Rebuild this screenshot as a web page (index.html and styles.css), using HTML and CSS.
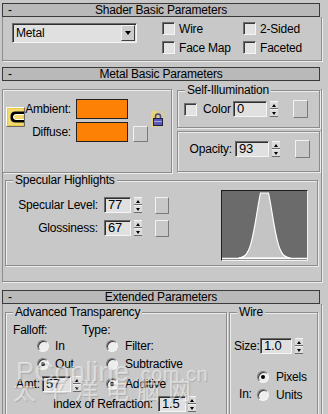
FILE: index.html
```html
<!DOCTYPE html>
<html>
    <head>
        <meta charset="utf-8">
        <title>Material Editor</title>
        <link rel="stylesheet" href="styles.css">
    </head>

    <body>
        <div class="panel">

            <!-- Shader Basic Parameters -->
            <div class="rollout">
                <div class="rollout-head"><span class="minus">-</span><span>Shader Basic Parameters</span></div>
                <div class="rollout-body shader-body">
                    <div class="combo">
                        <span class="combo-text">Metal</span>
                        <span class="combo-btn"><span class="tri-down"></span></span>
                    </div>
                    <div class="check-grid">
                        <div class="check"><span class="box"></span>Wire</div>
                        <div class="check"><span class="box"></span>2-Sided</div>
                        <div class="check"><span class="box"></span>Face Map</div>
                        <div class="check"><span class="box"></span>Faceted</div>
                    </div>
                </div>
            </div>

            <!-- Metal Basic Parameters -->
            <div class="rollout second">
                <div class="rollout-head"><span class="minus">-</span><span>Metal Basic Parameters</span></div>
                <div class="rollout-body metal-body">
                    <div class="metal-top">
                        <div class="group color-group">
                            <div class="ad-lock">
                                <svg width="19" height="20" viewBox="0 0 19 20">
                                    <rect width="19" height="20" fill="#e9c84a"/>
                                    <rect x="2" y="2" width="15" height="16" fill="#f3da70"/>
                                    <path d="M0.5 19.5 V0.5 H18.5" stroke="#ffffff" fill="none"/>
                                    <path d="M18.5 0.5 V19.5 H0.5" stroke="#6a6a6a" fill="none"/>
                                    <path d="M18 6 H9.5 Q6 6 6 9.5 V10.5 Q6 14 9.5 14 H18" stroke="#000" stroke-width="3" fill="none"/>
                                    <path d="M18 7.5 H10 Q7.5 7.5 7.5 10 Q7.5 12.5 10 12.5 H18" stroke="#ffffff" stroke-width="1" fill="none"/>
                                </svg>
                            </div>
                            <div class="swatch-rows">
                                <div class="swatch-row"><span class="swatch-label">Ambient:</span><span class="swatch"></span></div>
                                <div class="swatch-row"><span class="swatch-label">Diffuse:</span><span class="swatch"></span><span class="map-btn"></span></div>
                            </div>
                            <div class="lock">
                                <svg width="14" height="16" viewBox="0 0 14 16">
                                    <rect width="14" height="16" fill="#cfcab0"/>
                                    <rect width="6" height="16" fill="#e9d277"/>
                                    <path d="M4.5 8 V5.5 A2.5 2.5 0 0 1 9.5 5.5 V8" stroke="#4a4a6a" stroke-width="1.5" fill="none"/>
                                    <rect x="2.5" y="7.5" width="9" height="7" fill="#5a5ab4" stroke="#1e1e50"/>
                                    <line x1="3" y1="10.5" x2="11" y2="10.5" stroke="#a8a8e8"/>
                                </svg>
                            </div>
                        </div>

                        <div class="side-col">
                            <div class="group self-illum">
                                <span class="group-title">Self-Illumination</span>
                                <div class="si-row">
                                    <span class="box"></span>
                                    <span class="si-label">Color</span>
                                    <div class="spin">
                                        <span class="field w34">0</span>
                                        <span class="arrows"><span class="up"></span><span class="down"></span></span>
                                    </div>
                                    <span class="map-btn tall"></span>
                                </div>
                            </div>
                            <div class="group opacity">
                                <div class="si-row">
                                    <span class="op-label">Opacity:</span>
                                    <div class="spin">
                                        <span class="field w34">93</span>
                                        <span class="arrows"><span class="up"></span><span class="down"></span></span>
                                    </div>
                                    <span class="map-btn tall"></span>
                                </div>
                            </div>
                        </div>
                    </div>

                    <div class="group spec">
                        <span class="group-title">Specular Highlights</span>
                        <div class="spec-rows">
                            <div class="spec-row">
                                <span class="spec-label">Specular Level:</span>
                                <div class="spin">
                                    <span class="field w27">77</span>
                                    <span class="arrows"><span class="up"></span><span class="down"></span></span>
                                </div>
                                <span class="map-btn spec-btn"></span>
                            </div>
                            <div class="spec-row">
                                <span class="spec-label">Glossiness:</span>
                                <div class="spin">
                                    <span class="field w27">67</span>
                                    <span class="arrows"><span class="up"></span><span class="down"></span></span>
                                </div>
                                <span class="map-btn spec-btn"></span>
                            </div>
                        </div>
                        <div class="graph">
                            <svg width="85" height="69" viewBox="0 0 85 69">
                                <polygon fill="#c4c4c4" stroke="#ffffff" stroke-width="1.2"
                                    points="16.5,67 19.5,66.3 22.5,64.9 24.5,62.8 26.5,59.3 27.5,56.9 28.5,53.9 29.5,50.3 30.5,46.1 31.5,41.4 32.5,36.2 33.5,30.5 34.5,24.5 35.5,18.5 36.5,12.5 37.5,7 38.5,2 46.5,2 47.5,7 48.5,12.5 49.5,18.5 50.5,24.5 51.5,30.5 52.5,36.2 53.5,41.4 54.5,46.1 55.5,50.3 56.5,53.9 57.5,56.9 58.5,59.3 60.5,62.8 62.5,64.9 65.5,66.3 68.5,67"/>
                                <line x1="0" y1="67.5" x2="85" y2="67.5" stroke="#ffffff" stroke-width="1.5"/>
                            </svg>
                        </div>
                    </div>
                </div>
            </div>

            <!-- Extended Parameters -->
            <div class="rollout third">
                <div class="rollout-head"><span class="minus">-</span><span>Extended Parameters</span></div>
                <div class="rollout-body ext-body">
                    <div class="group adv">
                        <span class="group-title">Advanced Transparency</span>
                        <div class="adv-row r16">
                            <span class="col1">Falloff:</span>
                            <span>Type:</span>
                        </div>
                        <div class="adv-row r16">
                            <span class="col1"><span class="radio"></span>In</span>
                            <span class="col2"><span class="radio"></span>Filter:</span>
                        </div>
                        <div class="adv-row r20">
                            <span class="col1"><span class="radio on"></span>Out</span>
                            <span class="col2"><span class="radio"></span>Subtractive</span>
                        </div>
                        <div class="adv-row r20">
                            <span class="col1 amt">
                                <span class="amt-label">Amt:</span>
                                <span class="spin tight">
                                    <span class="field w29">57</span>
                                    <span class="arrows"><span class="up"></span><span class="down"></span></span>
                                </span>
                            </span>
                            <span class="col2"><span class="radio on"></span>Additive</span>
                        </div>
                        <div class="adv-row r20 ior">
                            <span class="ior-label">Index of Refraction:</span>
                            <span class="spin tight">
                                <span class="field w28">1.5</span>
                                <span class="arrows"><span class="up"></span><span class="down"></span></span>
                            </span>
                        </div>
                    </div>

                    <div class="group wire">
                        <span class="group-title">Wire</span>
                        <div class="size-row">
                            <span class="size-label">Size:</span>
                            <span class="spin">
                                <span class="field w32">1.0</span>
                                <span class="arrows"><span class="up"></span><span class="down"></span></span>
                            </span>
                        </div>
                        <div class="in-group">
                            <span class="in-label">In:</span>
                            <div class="in-radios">
                                <div class="in-row"><span class="radio on"></span>Pixels</div>
                                <div class="in-row"><span class="radio"></span>Units</div>
                            </div>
                        </div>
                    </div>

                    <!-- site watermark over the screenshot -->
                    <div class="watermark">
                        <div class="wm-line"><span class="wm-big">PConline</span><span class="wm-small">.com.cn</span></div>
                        <div class="wm-cn">太平洋电脑网</div>
                    </div>
                </div>
            </div>

        </div>
    </body>
</html>
```

FILE: styles.css
```css
/* Page */
body {
    margin: 0;
    background-color: #c8c8c8;
    font-family: "Liberation Sans", Arial, sans-serif;
    font-size: 11px;
    letter-spacing: -0.2px;
    color: #000;
    overflow: hidden;
}
.panel {
    padding: 3px 0 0 2px;
}

/* Rollouts */
.rollout-head {
    display: grid;
    grid-template-columns: 1fr auto 1fr;
    align-items: center;
    width: 318px;
    height: 14px;
    box-sizing: border-box;
    border: 1px solid #3a3a3a;
    background-color: #b9b9b9;
    font-size: 12px;
    line-height: 12px;
}
.minus {
    padding-left: 5px;
}
.rollout-body {
    width: 320px;
    box-sizing: border-box;
    border: 1px solid #8c8c8c;
    border-top: none;
    box-shadow: 1px 1px 0 #ececec;
}
.second {
    margin-top: 6px;
}
.third {
    margin-top: 8px;
}

/* Shader Basic */
.shader-body {
    display: flex;
    height: 44px;
}
.combo {
    display: flex;
    align-items: center;
    justify-content: space-between;
    width: 125px;
    height: 20px;
    box-sizing: border-box;
    margin: 6px 0 0 9px;
    border: 1px solid;
    border-color: #6c6c6c #f4f4f4 #f4f4f4 #6c6c6c;
    box-shadow: inset 1px 1px 0 #2e2e2e;
    background-color: #e0e0e0;
    font-size: 12px;
}
.combo-text {
    padding-left: 3px;
}
.combo-btn {
    display: flex;
    align-items: center;
    justify-content: center;
    width: 14px;
    height: 16px;
    box-sizing: border-box;
    margin-right: 1px;
    border: 1px solid;
    border-color: #f4f4f4 #404040 #404040 #f4f4f4;
    background-color: #cccccc;
}
.tri-down {
    border-left: 3px solid transparent;
    border-right: 3px solid transparent;
    border-top: 4px solid #000;
}
.check-grid {
    display: grid;
    grid-template-columns: 81px 70px;
    grid-auto-rows: 19px;
    margin: 2px 0 0 25px;
}
.check {
    display: flex;
    align-items: center;
    gap: 4px;
    font-size: 12px;
}
.box {
    width: 13px;
    height: 13px;
    box-sizing: border-box;
    border: 1px solid;
    border-color: #6c6c6c #f4f4f4 #f4f4f4 #6c6c6c;
    box-shadow: inset 1px 1px 0 #3a3a3a;
    background-color: #e2e2e2;
    flex-shrink: 0;
}

/* Group boxes */
.group {
    position: relative;
    box-sizing: border-box;
    border: 1px solid #8c8c8c;
    box-shadow: 1px 1px 0 #ececec, inset 1px 1px 0 #ececec;
}
.group-title {
    position: absolute;
    top: -7px;
    left: 7px;
    padding: 0 2px;
    background-color: #c8c8c8;
    line-height: 12px;
    font-size: 12px;
}

/* Buttons, spinners */
.map-btn {
    display: block;
    width: 15px;
    height: 16px;
    box-sizing: border-box;
    border: 1px solid;
    border-color: #f2f2f2 #7a7a7a #7a7a7a #f2f2f2;
    background-color: #c8c8c8;
    flex-shrink: 0;
}
.map-btn.tall {
    height: 18px;
    margin-left: 15px;
}
.spin {
    display: flex;
    align-items: center;
    gap: 3px;
}
.spin.tight {
    gap: 2px;
}
.field {
    display: block;
    height: 16px;
    box-sizing: border-box;
    padding-left: 3px;
    border: 1px solid;
    border-color: #6a6a6a #f4f4f4 #f4f4f4 #6a6a6a;
    box-shadow: inset 1px 1px 0 #2e2e2e;
    background-color: #e0e0e0;
    font-size: 13px;
    line-height: 14px;
}
.w27 { width: 27px; }
.w28 { width: 28px; }
.w29 { width: 29px; }
.w32 { width: 32px; }
.w34 { width: 34px; }
.arrows {
    display: flex;
    flex-direction: column;
    width: 8px;
    height: 16px;
}
.arrows span {
    flex: 1;
    display: flex;
    align-items: center;
    justify-content: center;
    box-sizing: border-box;
    border-top: 1px solid #f4f4f4;
    border-bottom: 1px solid #6a6a6a;
    background-color: #dcdcdc;
}
.arrows .up::after {
    content: "";
    border-left: 2px solid transparent;
    border-right: 2px solid transparent;
    border-bottom: 3px solid #000;
}
.arrows .down::after {
    content: "";
    border-left: 2px solid transparent;
    border-right: 2px solid transparent;
    border-top: 3px solid #000;
}

/* Metal Basic */
.metal-body {
    height: 193px;
}
.metal-top {
    display: flex;
    margin-top: 8px;
}
.color-group {
    display: flex;
    align-items: flex-start;
    width: 169px;
    height: 84px;
    border-left: none;
}
.ad-lock {
    display: flex;
    margin: 17px 0 0 3px;
}
.swatch-rows {
    display: flex;
    flex-direction: column;
    gap: 3px;
    margin-top: 9px;
}
.swatch-row {
    display: flex;
    align-items: flex-end;
    font-size: 12px;
}
.swatch-label {
    width: 46px;
    text-align: right;
    margin-right: 5px;
    align-self: center;
}
.swatch {
    display: block;
    width: 52px;
    height: 20px;
    box-sizing: border-box;
    border: 1px solid #222;
    background-color: #fd8104;
}
.swatch-row .map-btn {
    margin-left: 5px;
}
.lock {
    display: flex;
    margin: 21px 0 0 3px;
}
.side-col {
    display: flex;
    flex-direction: column;
    gap: 3px;
    margin: 1px 0 0 5px;
    width: 143px;
}
.self-illum {
    height: 38px;
    padding: 9px 0 0 6px;
}
.opacity {
    height: 41px;
    padding: 8px 0 0 0;
}
.si-row {
    display: flex;
    align-items: center;
    height: 18px;
    font-size: 12px;
}
.si-label {
    width: 30px;
    margin-left: 6px;
}
.op-label {
    width: 54px;
    margin-right: 3px;
    text-align: right;
}

/* Specular */
.spec {
    display: flex;
    align-items: flex-start;
    width: 313px;
    height: 86px;
    margin: 7px 0 0 2px;
}
.spec-rows {
    display: flex;
    flex-direction: column;
    gap: 5px;
    margin-top: 15px;
}
.spec-row {
    display: flex;
    align-items: center;
    height: 18px;
    font-size: 12px;
}
.spec-label {
    width: 92px;
    margin-right: 6px;
    text-align: right;
}
.spec-btn {
    width: 14px;
    height: 17px;
    margin-left: 13px;
}
.graph {
    margin: 9px 0 0 52px;
    width: 87px;
    height: 71px;
    box-sizing: border-box;
    border: 1px solid;
    border-color: #1e1e1e #f0f0f0 #f0f0f0 #1e1e1e;
    background-color: #6b6b6b;
}
.graph svg {
    display: block;
}

/* Extended */
.ext-body {
    position: relative;
    display: flex;
    align-items: flex-start;
    height: 130px;
    padding-top: 8px;
}
.adv {
    width: 222px;
    height: 108px;
    margin-left: 2px;
    padding: 9px 0 0 7px;
    font-size: 12px;
}
.adv-row {
    display: flex;
    align-items: center;
}
.r16 { height: 16px; }
.r20 { height: 20px; }
.col1 {
    display: flex;
    align-items: center;
    width: 69px;
}
.col2 {
    display: flex;
    align-items: center;
}
.col1 .radio, .col2 .radio {
    margin: 0 6px 0 24px;
}
.col2 .radio {
    margin-right: 7px;
}
.amt-label {
    width: 23px;
    margin: 0 3px 0 3px;
}
.ior {
    justify-content: flex-end;
    padding-right: 30px;
}
.ior-label {
    margin-right: 5px;
}
.radio {
    display: block;
    width: 12px;
    height: 12px;
    box-sizing: border-box;
    border: 1px solid;
    border-color: #7a7a7a #f6f6f6 #f6f6f6 #7a7a7a;
    border-radius: 50%;
    box-shadow: inset 1px 1px 0 #3c3c3c;
    background-color: #eeeeee;
    flex-shrink: 0;
}
.radio.on::after {
    content: "";
    display: block;
    width: 4px;
    height: 4px;
    margin: 3px;
    border-radius: 50%;
    background-color: #000;
}
.wire {
    width: 89px;
    height: 108px;
    margin-left: 2px;
    padding: 25px 0 0 4px;
    font-size: 12px;
}
.size-row {
    display: flex;
    align-items: center;
    height: 16px;
}
.size-label {
    width: 23px;
    margin-right: 3px;
}
.in-group {
    display: flex;
    align-items: center;
    margin-top: 14px;
}
.in-label {
    width: 18px;
    margin-left: 5px;
    padding-top: 16px;
}
.in-row {
    display: flex;
    align-items: center;
    gap: 7px;
    height: 18px;
}

/* Watermark */
.watermark {
    position: absolute;
    top: 55px;
    left: 10px;
    color: rgba(255, 255, 255, 0.5);
    text-shadow: 1px 1px 1px rgba(90, 90, 90, 0.25);
    pointer-events: none;
}
.wm-line {
    display: flex;
    align-items: baseline;
    height: 26px;
    margin-left: 3px;
    line-height: 26px;
}
.wm-big {
    font-size: 27px;
    letter-spacing: 0.5px;
}
.wm-small {
    font-size: 20px;
    margin-left: 5px;
    letter-spacing: 0.5px;
}
.wm-cn {
    margin-top: -9px;
    font-family: "Noto Sans CJK SC", sans-serif;
    font-size: 23px;
    line-height: 26px;
    letter-spacing: 8px;
}
```
